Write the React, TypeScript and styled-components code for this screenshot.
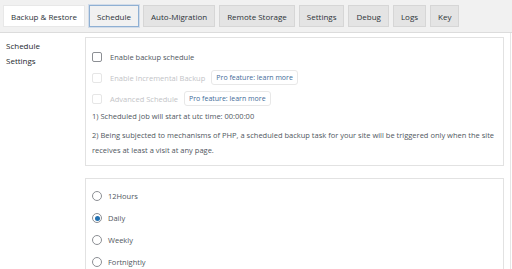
import styled, { createGlobalStyle } from 'styled-components';

const GlobalStyle = createGlobalStyle`
  html, body {
    margin: 0;
    padding: 0;
    background: #ffffff;
    font-family: "Open Sans", "Noto Sans", sans-serif;
  }
`;

const Page = styled.div`
  width: 512px;
  height: 269px;
  overflow: hidden;
  background: #ffffff;
`;

const TabBar = styled.nav`
  display: flex;
  gap: 4px;
  height: 33px;
  padding: 5px 0 0 3px;
  box-sizing: border-box;
  background: #f1f1f1;
  border-bottom: 1px solid #dcdcdc;
`;

const Tab = styled.div<{ $variant?: 'active' | 'focus' }>`
  height: 22px;
  padding: 0 7px;
  display: flex;
  align-items: center;
  box-sizing: border-box;
  font-size: 8px;
  color: #2c3338;
  border: 1px solid ${({ $variant }) => ($variant === 'focus' ? '#8fb0d3' : $variant === 'active' ? '#e8e8e8' : '#d6d6d6')};
  background: ${({ $variant }) => ($variant === 'active' ? '#ffffff' : $variant === 'focus' ? '#f1f1f1' : '#e4e4e4')};
  box-shadow: ${({ $variant }) => ($variant === 'focus' ? '0 0 0 1px rgba(120,160,210,0.25)' : 'none')};
  white-space: nowrap;
`;

const Panel = styled.div`
  display: flex;
  width: 511px;
  border-right: 1px solid #e6e6e6;
  box-sizing: border-box;
  height: 236px;
`;

const SideLabel = styled.div`
  width: 85px;
  flex-shrink: 0;
  padding: 5px 0 0 6px;
  box-sizing: border-box;
  font-size: 8px;
  line-height: 15px;
  color: #23282d;
`;

const Content = styled.div`
  width: 419px;
  display: flex;
  flex-direction: column;
  gap: 12px;
  padding-top: 4px;
`;

const Box = styled.section<{ $top?: number; $bottom?: number }>`
  border: 1px solid #e2e2e2;
  background: #ffffff;
  padding: ${({ $top }) => $top ?? 7}px 6px ${({ $bottom }) => $bottom ?? 6}px 6px;
`;

const Row = styled.label<{ $height?: number }>`
  display: flex;
  align-items: center;
  height: ${({ $height }) => $height ?? 21}px;
  font-size: 7.5px;
  color: #50575e;
`;

const Check = styled.span<{ $disabled?: boolean }>`
  width: 10px;
  height: 10px;
  box-sizing: border-box;
  border: 1px solid ${({ $disabled }) => ($disabled ? '#e6e6e6' : '#8c8f94')};
  border-radius: 2px;
  margin-right: 8px;
  background: #fff;
  flex-shrink: 0;
`;

const Radio = styled.span<{ $checked?: boolean }>`
  width: 10px;
  height: 10px;
  box-sizing: border-box;
  border: 1px solid #8c8f94;
  border-radius: 50%;
  margin-right: 6px;
  display: flex;
  align-items: center;
  justify-content: center;
  flex-shrink: 0;
  &::after {
    content: '';
    display: ${({ $checked }) => ($checked ? 'block' : 'none')};
    width: 5px;
    height: 5px;
    border-radius: 50%;
    background: #2271b1;
  }
`;

const LabelText = styled.span<{ $disabled?: boolean }>`
  color: ${({ $disabled }) => ($disabled ? '#c3c4c7' : '#50575e')};
`;

const ProBadge = styled.span`
  margin-left: 6px;
  height: 15px;
  padding: 0 4px;
  display: inline-flex;
  align-items: center;
  box-sizing: border-box;
  border: 1px solid #e8e8e8;
  border-radius: 3px;
  font-size: 7px;
  color: #3f6c99;
`;

const Note = styled.p<{ $gap?: number }>`
  margin: ${({ $gap }) => $gap ?? 0}px 0 0 0;
  font-size: 7.5px;
  line-height: 15px;
  color: #50575e;
`;

const tabs = ['Auto-Migration', 'Remote Storage', 'Settings', 'Debug', 'Logs', 'Key'];
const frequencies = ['12Hours', 'Daily', 'Weekly', 'Fortnightly'];

export default function App() {
  return (
    <Page>
      <GlobalStyle />
      <TabBar>
        <Tab $variant="active">Backup &amp; Restore</Tab>
        <Tab $variant="focus">Schedule</Tab>
        {tabs.map((t) => (
          <Tab key={t}>{t}</Tab>
        ))}
      </TabBar>
      <Panel>
        <SideLabel>
          Schedule
          <br />
          Settings
        </SideLabel>
        <Content>
          <Box $top={8} $bottom={7}>
            <Row>
              <Check />
              <LabelText>Enable backup schedule</LabelText>
            </Row>
            <Row>
              <Check $disabled />
              <LabelText $disabled>Enable Incremental Backup</LabelText>
              <ProBadge>Pro feature: learn more</ProBadge>
            </Row>
            <Row>
              <Check $disabled />
              <LabelText $disabled>Advanced Schedule</LabelText>
              <ProBadge>Pro feature: learn more</ProBadge>
            </Row>
            <Note>1) Scheduled job will start at utc time: 00:00:00</Note>
            <Note $gap={4}>
              2) Being subjected to mechanisms of PHP, a scheduled backup task for your site will be triggered only when the site
              receives at least a visit at any page.
            </Note>
          </Box>
          <Box $top={6}>
            {frequencies.map((f) => (
              <Row key={f} $height={22}>
                <Radio $checked={f === 'Daily'} />
                <LabelText>{f}</LabelText>
              </Row>
            ))}
          </Box>
        </Content>
      </Panel>
    </Page>
  );
}
